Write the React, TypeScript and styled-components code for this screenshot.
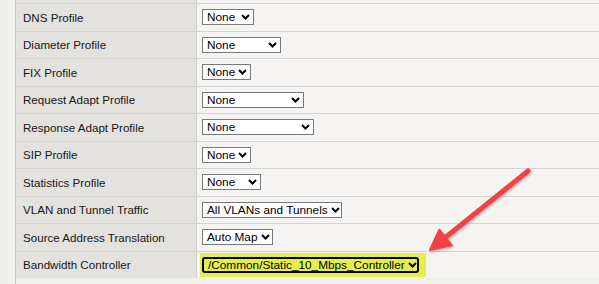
import React from 'react';
import styled, { createGlobalStyle } from 'styled-components';

const GlobalStyle = createGlobalStyle`
	html, body {
		margin: 0;
		padding: 0;
		background: #f0f0ef;
		overflow: hidden;
	}
	body {
		font-family: 'Liberation Sans', Arial, sans-serif;
	}
`;

type SelectProps = { $width: number; $marked?: boolean };

const rows: { label: string; value: string; width: number; marked?: boolean }[] = [
	{ label: 'DNS Profile', value: 'None', width: 52 },
	{ label: 'Diameter Profile', value: 'None', width: 79 },
	{ label: 'FIX Profile', value: 'None', width: 49 },
	{ label: 'Request Adapt Profile', value: 'None', width: 102 },
	{ label: 'Response Adapt Profile', value: 'None', width: 112 },
	{ label: 'SIP Profile', value: 'None', width: 49 },
	{ label: 'Statistics Profile', value: 'None', width: 59 },
	{ label: 'VLAN and Tunnel Traffic', value: 'All VLANs and Tunnels', width: 140 },
	{ label: 'Source Address Translation', value: 'Auto Map', width: 71 },
	{ label: 'Bandwidth Controller', value: '/Common/Static_10_Mbps_Controller', width: 217, marked: true },
];

export default function App() {
	return (
		<>
			<GlobalStyle />
			<StyledPage>
				<StyledGutter />
				<StyledTable>
					<StyledStub>
						<StyledLabel />
						<StyledValue />
					</StyledStub>
					{rows.map((row) => (
						<StyledRow key={row.label}>
							<StyledLabel>{row.label}</StyledLabel>
							<StyledValue>
								{row.marked ? (
									<StyledHighlight>
										<SelectBox value={row.value} width={row.width} marked />
									</StyledHighlight>
								) : (
									<SelectBox value={row.value} width={row.width} />
								)}
							</StyledValue>
						</StyledRow>
					))}
				</StyledTable>
				<Arrow />
			</StyledPage>
		</>
	);
}

const SelectBox = ({ value, width, marked }: { value: string; width: number; marked?: boolean }) => {
	return (
		<StyledSelect $width={width} $marked={marked}>
			<span>{value}</span>
			<svg width="9" height="6" viewBox="0 0 9 6">
				<path d="M1 1 L4.5 4.5 L8 1" fill="none" stroke="#000" strokeWidth="2" />
			</svg>
		</StyledSelect>
	);
};

const Arrow = () => {
	return (
		<StyledArrow width="599" height="284" viewBox="0 0 599 284">
			<defs>
				<filter id="shadow" x="-20%" y="-20%" width="140%" height="140%">
					<feDropShadow dx="1" dy="1.5" stdDeviation="1.2" floodColor="#000" floodOpacity="0.25" />
				</filter>
			</defs>
			<g filter="url(#shadow)" fill="#f24346" stroke="#f24346">
				<line x1="528" y1="171" x2="441" y2="241" strokeWidth="5" strokeLinecap="round" />
				<polygon points="430,250 439.3,229.7 451.9,245.3" strokeWidth="2" strokeLinejoin="round" />
			</g>
		</StyledArrow>
	);
};

const StyledPage = styled.div`
	position: relative;
	display: flex;
	width: 599px;
	height: 284px;
	overflow: hidden;
	color: #161616;
	font-size: 11.6px;
`;

const StyledGutter = styled.div`
	width: 15px;
	flex: none;
	background: #efefee;
	border-right: 1px solid #c9c7c4;
`;

const StyledTable = styled.div`
	flex: 1;
	display: flex;
	flex-direction: column;
`;

const StyledStub = styled.div`
	display: grid;
	grid-template-columns: 181px 1fr;
	height: 3px;
	flex: none;
`;

const StyledRow = styled.div`
	display: grid;
	grid-template-columns: 181px 1fr;
	height: 27.5px;
	flex: none;
	box-sizing: border-box;
	border-top: 1px solid #d6d4d1;
`;

const StyledLabel = styled.div`
	display: flex;
	align-items: center;
	padding-left: 7px;
	background: #e4e2df;
	border-right: 1px solid #d2d0cd;
	white-space: nowrap;
`;

const StyledValue = styled.div`
	display: flex;
	align-items: center;
	padding-left: 5px;
	background: #f5f4f2;
`;

const StyledHighlight = styled.span`
	display: inline-flex;
	margin-left: -2px;
	padding: 4px 7px 4px 2px;
	background: #e6ef4a;
`;

const StyledSelect = styled.span<SelectProps>`
	display: inline-flex;
	align-items: center;
	justify-content: space-between;
	box-sizing: border-box;
	width: ${({ $width }) => $width}px;
	height: 16px;
	padding: 0 3px 0 4px;
	background: ${({ $marked }) => ($marked ? 'transparent' : '#fff')};
	border: ${({ $marked }) => ($marked ? '2px solid #000' : '1px solid #7a7a7a')};
	border-radius: ${({ $marked }) => ($marked ? '3px' : '0')};
	font-size: 11.8px;
	color: #000;
	white-space: nowrap;

	svg {
		flex: none;
		margin-left: 3px;
	}
`;

const StyledArrow = styled.svg`
	position: absolute;
	left: 0;
	top: 0;
	pointer-events: none;
`;
